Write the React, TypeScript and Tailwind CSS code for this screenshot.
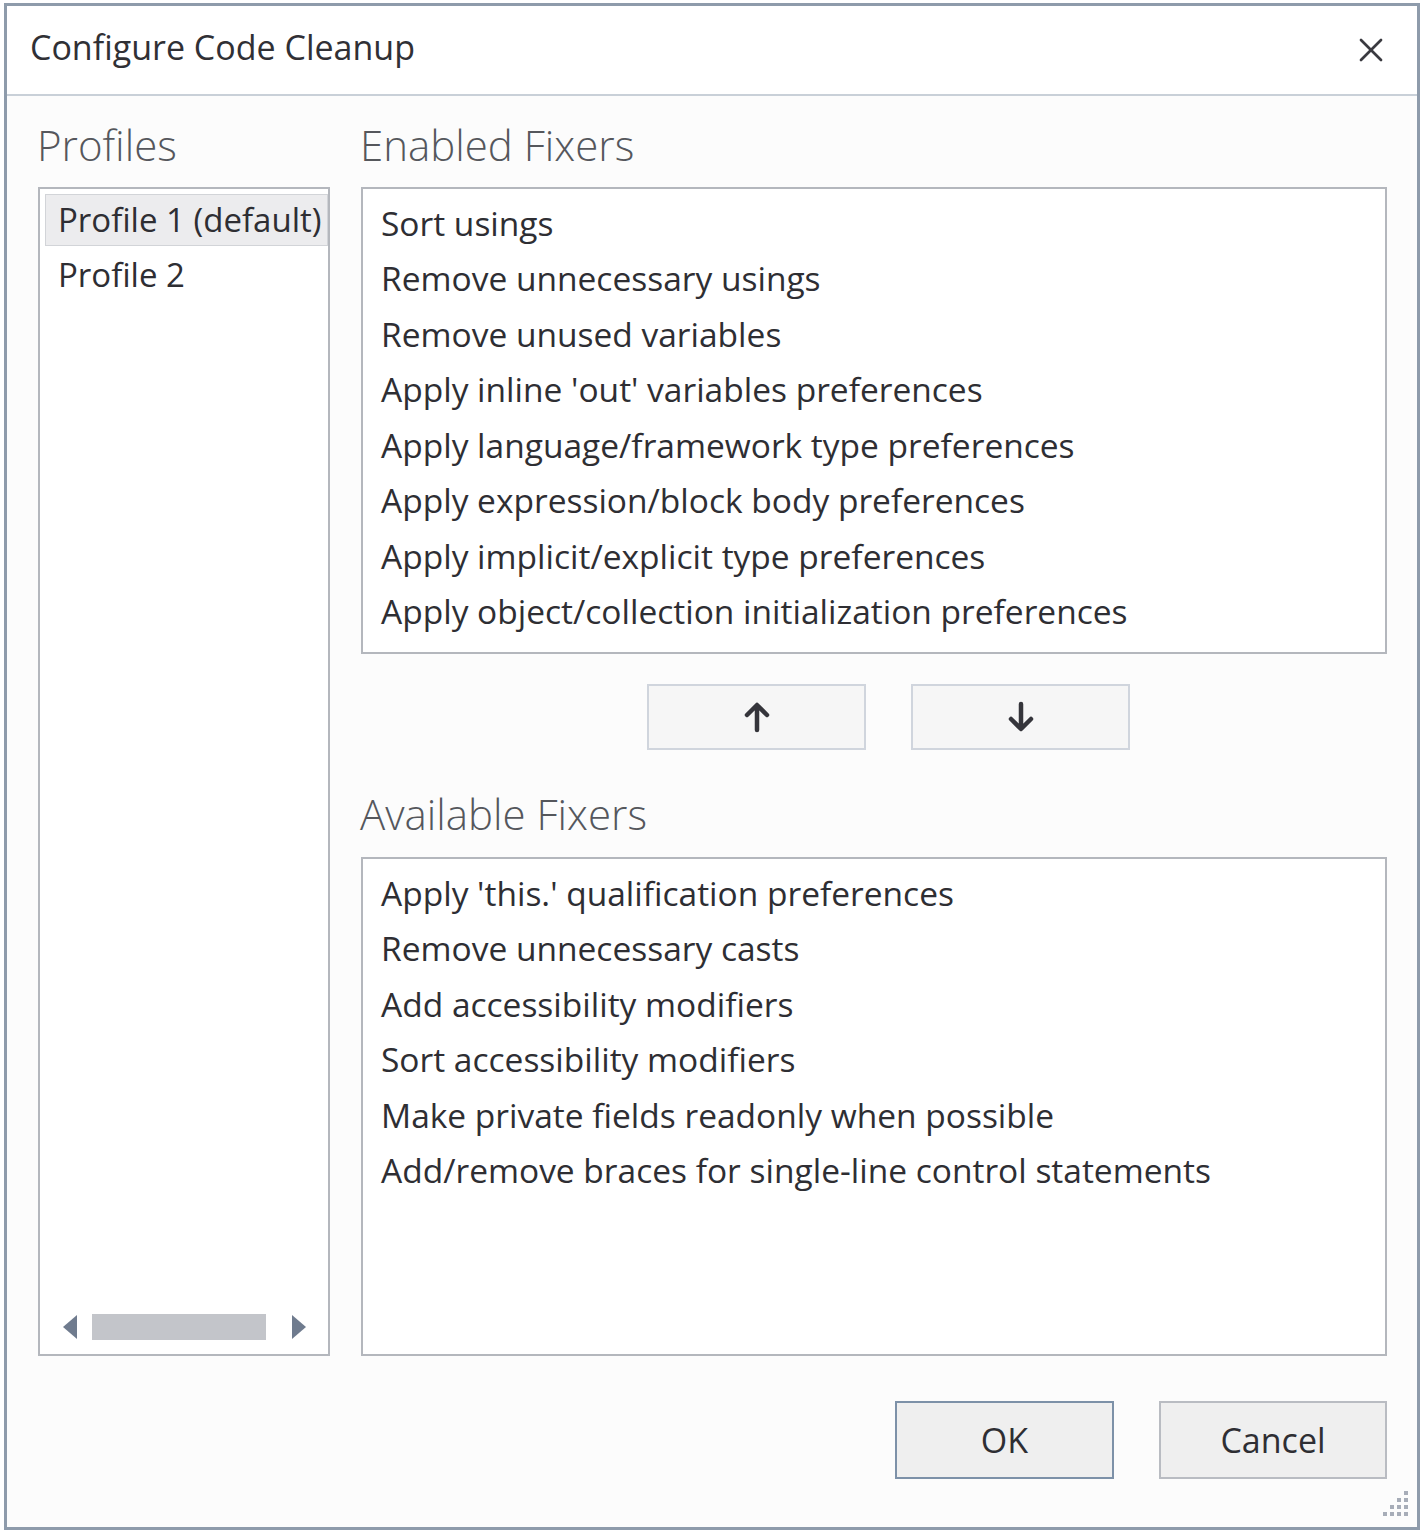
import { X } from "lucide-react";

const enabledFixers = [
  "Sort usings",
  "Remove unnecessary usings",
  "Remove unused variables",
  "Apply inline 'out' variables preferences",
  "Apply language/framework type preferences",
  "Apply expression/block body preferences",
  "Apply implicit/explicit type preferences",
  "Apply object/collection initialization preferences",
];

const availableFixers = [
  "Apply 'this.' qualification preferences",
  "Remove unnecessary casts",
  "Add accessibility modifiers",
  "Sort accessibility modifiers",
  "Make private fields readonly when possible",
  "Add/remove braces for single-line control statements",
];

function FixerList({ items, height }: { items: string[]; height: string }) {
  return (
    <div className={`${height} border-2 border-[#b4b7bd] bg-white pt-[6px] pl-[18px]`}>
      {items.map(item => (
        <div key={item} className="h-[55.5px] flex items-center text-[33.5px] font-medium text-[#2e2e33] whitespace-nowrap">
          {item}
        </div>
      ))}
    </div>
  );
}

function Heading({ children }: { children: string }) {
  return (
    <div className="h-[91px] flex items-center pt-[6px] text-[42px] font-light text-[#55575c] leading-none -ml-[1px]">
      {children}
    </div>
  );
}

function Grip() {
  // resize grip dots, bottom-right corner
  const dots = [
    [3, 0],
    [2, 1], [3, 1],
    [1, 2], [2, 2], [3, 2],
    [0, 3], [1, 3], [2, 3], [3, 3],
  ];
  return (
    <svg width="30" height="30" viewBox="0 0 30 30" className="absolute right-[6px] bottom-[8px]">
      {dots.map(([x, y]) => (
        <rect key={`${x}-${y}`} x={x * 7 + 2} y={y * 7 + 2} width="4" height="4" fill="#a7adb8" />
      ))}
    </svg>
  );
}

export default function App() {
  return (
    <div className="w-[1423px] h-[1533px] bg-white pt-[3px] pl-[4px]" style={{ fontFamily: '"Open Sans", "Noto Sans", sans-serif' }}>
      <div className="relative w-[1416px] h-[1527px] border-[3px] border-[#8e9bab] bg-[#fcfcfc] flex flex-col">
        {/* Title bar */}
        <div className="h-[90px] shrink-0 flex items-center justify-between pl-[23px] pr-[26px] bg-white border-b-2 border-[#c9d0d8]">
          <span className="text-[34px] font-medium text-[#303035] pb-[6px]">Configure Code Cleanup</span>
          <X className="h-[40px] w-[40px] text-[#3a3a40]" strokeWidth={1.6} />
        </div>

        {/* Body */}
        <div className="flex gap-[31px] pl-[31px] pr-[30px]">
          {/* Profiles */}
          <div className="w-[292px] flex flex-col">
            <Heading>Profiles</Heading>
            <div className="h-[1169px] border-2 border-[#b4b7bd] bg-white pt-[5px] pb-[5px] pl-[5px] pr-0 flex flex-col">
              <div className="h-[52px] flex items-center pl-[12px] bg-[#ececee] border border-[#d2d4d8] text-[33px] font-medium text-[#2e2e33] whitespace-nowrap">
                Profile 1 (default)
              </div>
              <div className="h-[57px] flex items-center pl-[13px] text-[33px] font-medium text-[#2e2e33]">Profile 2</div>
              <div className="flex-1" />
              {/* horizontal scrollbar */}
              <div className="h-[40px] mb-[2px] flex items-center pl-[17px] pr-[21px]">
                <svg width="16" height="26" viewBox="0 0 16 26">
                  <path d="M15 1 L1 13 L15 25 Z" fill="#6f7b8e" />
                </svg>
                <div className="w-[174px] h-[26px] ml-[14px] bg-[#c3c5ca]" />
                <div className="flex-1" />
                <svg width="16" height="26" viewBox="0 0 16 26">
                  <path d="M1 1 L15 13 L1 25 Z" fill="#6f7b8e" />
                </svg>
              </div>
            </div>
          </div>

          {/* Fixers */}
          <div className="flex-1 flex flex-col">
            <Heading>Enabled Fixers</Heading>
            <FixerList items={enabledFixers} height="h-[467px]" />

            <div className="flex gap-[45px] pl-[286px] pt-[30px]">
              <button className="w-[219px] h-[66px] border-2 border-[#d0d5dd] bg-[#f6f6f6] flex items-center justify-center">
                <svg width="26" height="32" viewBox="0 0 26 32">
                  <path d="M13 29 V5 M3 14 L13 4 L23 14" fill="none" stroke="#35353b" strokeWidth="4.5" strokeLinecap="round" strokeLinejoin="round" />
                </svg>
              </button>
              <button className="w-[219px] h-[66px] border-2 border-[#d0d5dd] bg-[#f6f6f6] flex items-center justify-center">
                <svg width="26" height="32" viewBox="0 0 26 32">
                  <path d="M13 3 V27 M3 18 L13 28 L23 18" fill="none" stroke="#35353b" strokeWidth="4.5" strokeLinecap="round" strokeLinejoin="round" />
                </svg>
              </button>
            </div>

            <div className="h-[107px] flex items-end pb-[22px] text-[42px] font-light text-[#55575c] leading-none -ml-[1px]">
              Available Fixers
            </div>
            <FixerList items={availableFixers} height="h-[499px]" />
          </div>
        </div>

        {/* Footer */}
        <div className="flex justify-end gap-[45px] pr-[30px] pt-[45px]">
          <button className="w-[219px] h-[78px] border-2 border-[#7d91a8] bg-[#efefef] text-[34px] font-medium text-[#2e2e33]">OK</button>
          <button className="w-[228px] h-[78px] border-2 border-[#b9bcc2] bg-[#efefef] text-[34px] font-medium text-[#2e2e33]">Cancel</button>
        </div>

        <Grip />
      </div>
    </div>
  );
}
